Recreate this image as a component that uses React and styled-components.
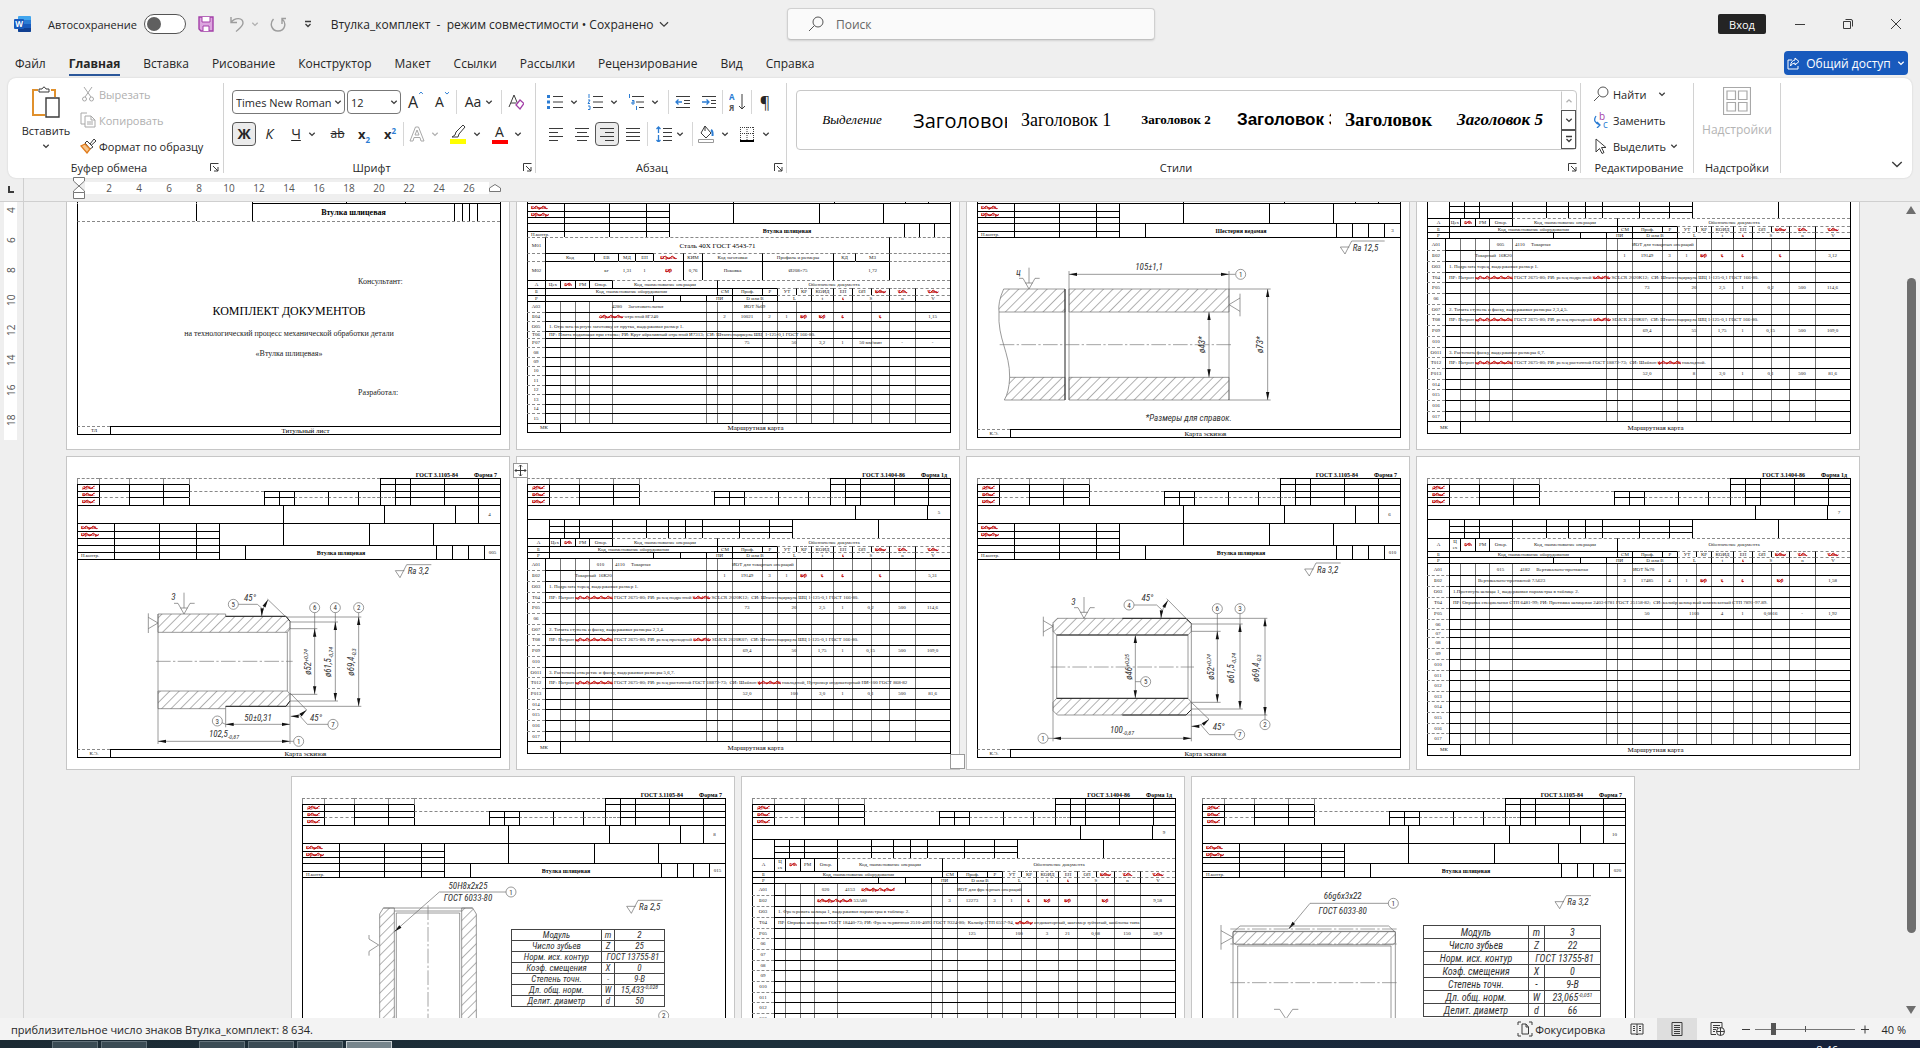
import styled, { createGlobalStyle, css } from "styled-components"

const GlobalStyle = createGlobalStyle`
  html, body, #root {
    height: 100%;
    margin: 0;
  }
  * {
    box-sizing: border-box;
  }
  body {
    background: #efefef;
    color: #262626;
    font-family: "Open Sans", "Noto Sans", sans-serif;
    font-size: 12px;
    overflow: hidden;
  }
  button, input, select {
    font: inherit;
    color: inherit;
    margin: 0;
    padding: 0;
    border: none;
    background: none;
  }
`

const App = styled.div`
  display: flex;
  flex-direction: column;
  height: 100vh;
`

/* ---------- icons ---------- */

const Svg = styled.svg`
  flex: none;
  display: block;
  fill: none;
  stroke: ${(p) => p.$color || "#3b3b3b"};
  stroke-width: 1;
`

const Icon = ({ w = 16, h = 16, color, children }) => (
  <Svg width={w} height={h} viewBox={`0 0 ${w} ${h}`} $color={color} aria-hidden="true">
    {children}
  </Svg>
)

const Chevron = ({ w = 8, color, up }) => (
  <Svg width={w} height={w} viewBox="0 0 8 8" $color={color} aria-hidden="true">
    <path d={up ? "M1.5 5.2 L4 2.8 L6.5 5.2" : "M1.3 2.8 L4 5.4 L6.7 2.8"} strokeWidth={w > 8 ? 0.8 : 1.3} />
  </Svg>
)

const WordIcon = () => (
  <Icon w={18} h={18}>
    <g stroke="none">
      <rect x="4" y="1" width="13" height="16" rx="1" fill="#41a5ee" />
      <rect x="4" y="5" width="13" height="4" fill="#2b7cd3" />
      <rect x="4" y="9" width="13" height="4" fill="#185abd" />
      <path d="M4 13 H17 V16 a1 1 0 0 1 -1 1 H5 a1 1 0 0 1 -1 -1 Z" fill="#103f91" />
      <rect x="0" y="4" width="10" height="10" rx="1" fill="#185abd" />
      <text x="5" y="12" fontSize="8" fontWeight="700" fill="#fff" textAnchor="middle">W</text>
    </g>
  </Icon>
)

const Launcher = () => (
  <Icon w={9} h={9}>
    <path d="M.5 8 V.5 H8.5 M3 3 L8 8 M8 4 V8 H4" />
  </Icon>
)

const SearchIcon = ({ w = 16 }) => (
  <Svg width={w} height={w} viewBox="0 0 16 16" $color="#555">
    <circle cx="10" cy="6" r="5" />
    <path d="M6.4 9.6 L1 15" />
  </Svg>
)

/* ---------- title bar ---------- */

const TitleBar = styled.header`
  display: flex;
  align-items: center;
  height: 48px;
  flex: none;
  padding-left: 14px;
`

const TitleSide = styled.div`
  display: flex;
  align-items: center;
  flex: 1;
  justify-content: ${(p) => (p.$end ? "flex-end" : "flex-start")};
`

const AutoSave = styled.label`
  display: flex;
  align-items: center;
  gap: 7px;
  margin-left: 16px;
  font-size: 11px;
`

const Toggle = styled.input`
  appearance: none;
  width: 42px;
  height: 20px;
  border: 1px solid #555;
  border-radius: 10px;
  background: #fff;
  display: flex;
  align-items: center;
  padding: 0 2px;

  &::before {
    content: "";
    width: 14px;
    height: 14px;
    border-radius: 50%;
    background: #5f5f5f;
  }
`

const PlainButton = styled.button`
  display: flex;
  align-items: center;
  justify-content: center;
  flex: none;
  gap: ${(p) => p.$gap ?? 6}px;
  width: ${(p) => (p.$w ? p.$w + "px" : "auto")};
  height: 24px;
`

const DocTitle = styled.div`
  display: flex;
  align-items: center;
  gap: 4px;
  margin-left: 9px;
  white-space: pre;
`

const SearchBox = styled.label`
  display: flex;
  align-items: center;
  gap: 12px;
  width: 368px;
  height: 32px;
  margin-left: 8px;
  padding: 0 20px;
  background: #fafafa;
  border: 1px solid #d0d0d0;
  border-bottom-color: #c0c0c0;
  border-radius: 4px;
  box-shadow: 0 1px 2px rgba(0, 0, 0, 0.12);

  input {
    flex: 1;
    outline: none;
  }
  input::placeholder {
    color: #666;
    opacity: 1;
  }
`

const SignIn = styled.button`
  width: 48px;
  height: 20px;
  background: #242424;
  color: #fff;
  border-radius: 2px;
  font-size: 11px;
  margin-right: 10px;
`

/* ---------- tabs ---------- */

const TabBar = styled.nav`
  display: flex;
  align-items: center;
  height: 30px;
  flex: none;
  padding: 0 12px 0 15px;
  gap: 23px;
`

const Tab = styled.a`
  color: inherit;
  text-decoration: none;
  line-height: 21px;
  margin-top: 2px;
  border-bottom: 2px solid ${(p) => (p.$active ? "#2b579a" : "transparent")};
  font-weight: ${(p) => (p.$active ? 700 : 400)};
`

const Share = styled.button`
  display: flex;
  align-items: center;
  justify-content: center;
  gap: 6px;
  width: 124px;
  height: 24px;
  margin-left: auto;
  background: #185abd;
  color: #fff;
  border-radius: 4px;
`

/* ---------- ribbon ---------- */

const Ribbon = styled.div`
  display: flex;
  flex: none;
  height: 100px;
  margin: 0 8px;
  background: #fff;
  border-radius: 8px;
  box-shadow: 0 0 2px rgba(0, 0, 0, 0.16);
`

const Group = styled.section`
  display: flex;
  flex-direction: column;
  flex: ${(p) => (p.$grow ? "0 1 " : "none; width: ")}${(p) => p.$w}px;
  min-width: 0;
  padding: ${(p) => p.$pad};
`

const GroupSep = styled.i`
  flex: none;
  width: 1px;
  height: 90px;
  margin-top: 5px;
  background: #d2d2d2;
`

const GroupLabel = styled.footer`
  display: flex;
  align-items: center;
  height: 20px;
  margin-top: auto;
  padding-bottom: 1px;

  span {
    flex: 1;
    text-align: center;
    white-space: nowrap;
    font-size: 11px;
  }
  span:not(:last-child) {
    padding-right: 12px;
  }
`

const ToolRow = styled.div`
  display: flex;
  align-items: center;
  height: 24px;
  margin-bottom: 8px;
`

const Tool = styled(PlainButton)`
  border-radius: 4px;
  ${(p) =>
    p.$on &&
    css`
      background: #ebebeb;
      border: 1px solid #555;
    `}
`

const ToolSep = styled.i`
  flex: none;
  width: 1px;
  height: 24px;
  margin-left: ${(p) => p.$gap || 0}px;
  background: #d6d6d6;
`

const Combo = styled.label`
  display: flex;
  align-items: center;
  width: ${(p) => p.$w}px;
  height: 24px;
  margin-right: 2px;
  padding: 0 2px 0 3px;
  border: 1px solid #777;
  border-radius: 4px;

  select {
    appearance: none;
    flex: 1;
    min-width: 0;
    outline: none;
    font-size: 11px;
  }
`

const Glyph = styled.span`
  font-size: ${(p) => p.$size || 14}px;
  line-height: 20px;
  font-weight: ${(p) => (p.$bold ? 700 : 400)};
  font-style: ${(p) => (p.$italic ? "italic" : "normal")};
  text-decoration: ${(p) => p.$line || "none"};

  sub, sup {
    font-size: 8px;
    line-height: 0;
    color: #2b7cd3;
  }
`

const Raised = styled.span`
  align-self: flex-start;
`

const Swatched = styled.span`
  display: block;
  width: 16px;
  height: 20px;
  font-size: 14px;
  line-height: 16px;
  text-align: center;
  border-bottom: 4px solid ${(p) => p.$color};
`

const ClipboardBody = styled.div`
  display: flex;
  gap: 8px;
`

const BigButton = styled.button`
  display: flex;
  flex-direction: column;
  align-items: center;
  gap: ${(p) => p.$gap || 4}px;
  width: ${(p) => (p.$w ? p.$w + "px" : "auto")};
  padding-top: 3px;
  font-size: ${(p) => p.$size || 11}px;
  color: ${(p) => (p.$off ? "#b4b4b4" : "inherit")};
`

const SmallList = styled.div`
  display: flex;
  flex-direction: column;
  gap: 2px;
`

const SmallButton = styled.button`
  display: flex;
  align-items: center;
  gap: ${(p) => p.$gap || 3}px;
  height: 24px;
  white-space: nowrap;
  font-size: 11px;
  color: ${(p) => (p.$off ? "#b0b0b0" : "inherit")};
`

const Gallery = styled.div`
  display: flex;
  height: 60px;
  border: 1px solid #c8c8c8;
  border-radius: 4px;
`

const GalleryItems = styled.div`
  display: flex;
  flex: 1;
  min-width: 0;
  gap: 14px;
  padding: 0 8px;
  overflow: hidden;
`

const StyleItem = styled.button`
  flex: 0 0 94px;
  overflow: hidden;
  white-space: nowrap;
  color: #000;
  text-align: ${(p) => (p.$center ? "center" : "left")};
  font: ${(p) => p.$font};
`

const GalleryNav = styled.div`
  display: flex;
  flex-direction: column;
  flex: none;
  width: 15px;
`

const NavButton = styled.button`
  flex: 1;
  display: flex;
  align-items: center;
  justify-content: center;
  border: 1px solid ${(p) => (p.$off ? "transparent" : "#555")};
  border-left-color: ${(p) => (p.$off ? "#c8c8c8" : "#555")};
`

const Collapse = styled.button`
  margin: auto 8px 7px auto;
`

/* ---------- rulers and canvas ---------- */

const RulerBar = styled.div`
  display: flex;
  align-items: center;
  flex: none;
  height: 24px;
  border-bottom: 1px solid #cfcfcf;
`

const RulerCorner = styled.div`
  display: flex;
  align-items: center;
  width: 24px;
  height: 23px;
  padding-left: 8px;
  border-right: 1px solid #cfcfcf;
`

const HRuler = styled.div`
  display: flex;
  align-items: center;
  align-self: flex-start;
  height: 20px;
  margin-left: 49px;

  ol {
    display: grid;
    grid-template-columns: repeat(13, 30px);
    width: 404px;
    height: 12px;
    margin: 0;
    padding: 0 0 0 9px;
    list-style: none;
    background: #fff;
    color: #555;
    font-size: 10px;
    line-height: 12px;
    text-align: center;
  }
`

const Work = styled.div`
  display: flex;
  flex: 1;
  min-height: 0;
`

const VRuler = styled.div`
  flex: none;
  width: 24px;
  border-right: 1px solid #cfcfcf;

  ol {
    width: 13px;
    margin: 0 0 0 4px;
    padding: 0 0 5px;
    list-style: none;
    background: #fff;
    color: #555;
    font-size: 10px;
  }
  li {
    display: flex;
    align-items: center;
    justify-content: center;
    height: 30px;
    writing-mode: vertical-rl;
    transform: rotate(180deg);
  }
  li:first-child {
    height: 16px;
    margin-bottom: 7px;
  }
`

const Canvas = styled.main`
  flex: 1;
  min-width: 0;
  overflow: hidden;
`

/* the view is scrolled down by 66px */
const Pages = styled.div`
  display: flex;
  flex-wrap: wrap;
  justify-content: center;
  gap: 6px;
  margin-top: -66px;
`

const ScrollBar = styled.div`
  display: flex;
  flex-direction: column;
  align-items: center;
  flex: none;
  width: 18px;
  padding: 4px 0;
`

const ScrollTrack = styled.div`
  flex: 1;
  padding-top: 64px;

  &::before {
    content: "";
    display: block;
    width: 9px;
    height: 90%;
    border-radius: 5px;
    background: #6e6e6e;
  }
`

/* ---------- document sheets ---------- */

const Sheet = styled.article`
  position: relative;
  display: flex;
  flex-direction: column;
  width: 444px;
  height: 314px;
  padding: 0 8px 0 10px;
  background: #fff;
  border: 1px solid #c6c6c6;
  color: #222;
  font-family: "Liberation Serif", serif;
  font-size: 5px;
  line-height: 6px;
`

const FormName = styled.div`
  display: flex;
  justify-content: flex-end;
  align-items: flex-end;
  gap: 16px;
  height: 21px;
  padding-right: 4px;
  color: #000;
  font-size: 6px;
  font-weight: 700;
`

const Frame = styled.div`
  display: flex;
  flex-direction: column;
  width: 424px;
  height: ${(p) => p.$h}px;
  border: solid #000;
  border-width: 0 1px 1px 0;
`

const lineOf = (mark) =>
  mark === "-" || mark === "|" ? "1px solid #000" : mark === "." ? "1px dashed #888" : "1px solid transparent"

const Strip = styled.div`
  display: flex;
  flex: none;
  height: ${(p) => p.$h}px;
`

const Cell = styled.div`
  display: flex;
  align-items: center;
  justify-content: center;
  flex: none;
  width: ${(p) => p.$w}px;
  border-top: ${(p) => lineOf(p.$top)};
  border-left: ${(p) => lineOf(p.$left)};
  white-space: pre;
  text-align: center;
  min-height: 0;
`

const Block = styled.div`
  display: flex;
`

const Err = styled.span`
  color: #b00;
  font-weight: 700;
  text-decoration: underline wavy #c00000 1px;
  text-underline-offset: -4px;
  text-decoration-skip-ink: none;
`

const Role = styled.span`
  margin: 0 auto 0 3px;
`

const Big = styled.span`
  font-size: ${(p) => p.$size || 7}px;
  font-weight: ${(p) => (p.$bold ? 700 : 400)};
  line-height: 8px;
  color: #000;
`

// top and left hold one mark per cell: - or | solid, . dashed, blank none
const Row = ({ h, at, end = 423, top = "", left = "", text = {} }) => (
  <Strip $h={h}>
    {at.map((x, i) => (
      <Cell key={x} $w={(at[i + 1] ?? end) - x} $top={top[i] ?? "-"} $left={left[i] ?? "|"}>
        {text[i]}
      </Cell>
    ))}
  </Strip>
)

const TOP = [0, 22, 52, 86, 112, 303, 318, 333, 367, 401]
const TOP_LOW = [0, 22, 52, 86, 112, 187, 202, 217, 251, 281, 303, 318, 333, 367, 401]

const FormTop = () => (
  <>
    <Row h={6} at={TOP} top=".....-----" left=".....|||||" />
    <Row h={7} at={TOP} top="---- -----" text={{ 0: <Err>Дубл.</Err> }} />
    <Row h={6} at={TOP_LOW} top="----.----------" text={{ 0: <Err>Взам.</Err> }} />
    <Row h={8} at={TOP_LOW} top="-.-- --....----" text={{ 0: <Err>Подл.</Err> }} />
  </>
)

const Signatures = ({ heights, name, oper, split = true }) => {
  const [a, b, c, d, e] = heights
  const at = [0, 37, 82, 119]
  const nameAt = split ? [142, 168, 359, 375, 391, 407] : [142, 377, 392, 407]
  return (
    <Block>
      <div>
        <Row h={a} at={at} end={142} text={{ 0: <Role><Err>Разраб.</Err></Role> }} />
        <Row h={b} at={at} end={142} text={{ 0: <Role><Err>Провер.</Err></Role> }} />
        <Row h={c} at={at} end={142} />
        <Row h={d} at={at} end={142} />
        <Row h={e} at={at} end={142} text={{ 0: <Role>Н.контр.</Role> }} />
      </div>
      <div>
        <Row h={a + b + c} at={[142, 206, 292, 356]} />
        <Row h={d + e} at={nameAt} text={{ [split ? 1 : 0]: <Big $size={6} $bold>{name}</Big>, 5: oper }} />
      </div>
    </Block>
  )
}

const Footer = ({ h = 8, mark, title, dashed }) => (
  <Row h={h} at={[0, 33]} top={dashed ? ".-" : "--"} text={{ 0: mark, 1: <Big>{title}</Big> }} />
)

/* ---------- route sheet table ---------- */

const GUIDES = [33, 48, 62, 85, 179, 190, 205, 235, 250, 269, 284, 306, 325, 344, 362, 388]

const rule = (x, color) => `linear-gradient(${color}, ${color}) ${x}px 0 / 1px 100% no-repeat`

const RouteTable = styled.table`
  table-layout: fixed;
  width: 423px;
  flex: none;
  border-spacing: 0;
  background: ${(p) => [rule(0, "#000"), rule(p.$label, "#000"), ...GUIDES.map((x) => rule(x, "#777"))].join(", ")};

  td, th {
    padding: 0;
    border-top: 1px solid #000;
    text-align: center;
    vertical-align: middle;
    font-weight: 400;
    line-height: 6px;
    white-space: pre;
  }
  th {
    border-top: 1px dashed #888;
  }
  tr:first-child th {
    border-top: 1px solid #000;
  }
`

const RouteRow = styled.tr`
  height: ${(p) => p.$h}px;
`

const LeftCell = styled.td`
  && {
    text-align: left;
    padding-left: ${(p) => p.$pad}px;
  }
`

const Route = ({ label, rows }) => {
  const at = [0, label, ...GUIDES, 423]
  return (
    <RouteTable $label={label}>
      <colgroup>
        {at.slice(0, -1).map((x, i) => (
          <col key={x} width={at[i + 1] - x} />
        ))}
      </colgroup>
      <tbody>
        {rows.map(([h, name, cells = {}]) => {
          const out = []
          for (let i = 1; i < at.length - 1; i++) {
            const c = cells[i]
            if (c && c.span) {
              out.push(
                c.center ? (
                  <td key={i} colSpan={c.span}>{c.t}</td>
                ) : (
                  <LeftCell key={i} colSpan={c.span} $pad={c.pad ?? 3}>{c.t}</LeftCell>
                )
              )
              i += c.span - 1
            } else {
              out.push(<td key={i}>{c}</td>)
            }
          }
          return (
            <RouteRow key={name} $h={h}>
              <th scope="row">{name}</th>
              {out}
            </RouteRow>
          )
        })}
      </tbody>
    </RouteTable>
  )
}

const line = (t, pad = 4) => ({ 1: { t, span: 17, pad } })
const mid = (t) => ({ t, span: 2, center: true })
const e = (t) => <Err>{t}</Err>

const cut = (d, l, t, s, n, v) => ({ 8: d, 10: mid(l), 12: t, 13: "1", 14: mid(s), 16: n, 17: v })

const RouteHead = ({ heights, label = 22, shop = "Цех" }) => (
  <>
    <Row
      h={heights[0]}
      at={[0, label, 33, 48, 62, 85, 190]}
      top="-----.."
      left="||||||"
      text={{ 0: "А", 1: shop, 2: e("Уч."), 3: "РМ", 4: "Опер.", 5: "Код, наименование операции", 6: "Обозначение документа" }}
    />
    <Row
      h={heights[1]}
      at={[0, label, 190, 205, 235, 250, 269, 284, 306, 325, 344, 362, 388]}
      top="-----........"
      text={{ 0: "Б", 1: "Код, наименование оборудования", 2: "СМ", 3: "Проф.", 4: "Р", 5: "УТ", 6: "КР", 7: "КОИД", 8: "ЕН", 9: "ОП", 10: e("Кшт."), 11: e("Тпз."), 12: e("Тшт.") }}
    />
    <Row
      h={heights[2]}
      at={[0, label, 126, 153, 179, 205, 250, 284, 306, 325, 362, 388]}
      top="------......"
      text={{ 0: "Р", 4: "ПИ", 5: "D или В", 6: "L", 7: "t", 8: e("i"), 9: "S", 10: "n", 11: "V" }}
    />
  </>
)

const RouteSheet = ({ page, tall, rows, footer, shop, children }) => (
  <Sheet>
    <FormName><span>ГОСТ 3.1404-86</span><span>Форма 1д</span></FormName>
    <Frame $h={footer.frame}>
      <FormTop />
      <Row h={14} at={[0, 328, 400]} text={{ 2: page }} />
      <Block>
        <Row h={19} at={[0]} end={22} />
        <div>
          {[7, 6, 6].map((h, i) => (
            <Row key={i} h={h} at={[22, 37, 52, 85, 119, 141, 158, 175, 212, 242]} end={265} />
          ))}
        </div>
        <Row h={19} at={[265, 351]} />
      </Block>
      <RouteHead heights={[tall ? 13 : 8, 6, 6]} shop={shop} />
      <Route label={tall ? 22 : 18} rows={rows} />
      <Footer h={footer.h} mark="МК" title="Маршрутная карта" />
    </Frame>
    {children}
  </Sheet>
)

const HEIGHTS = [12, 11, 11, 10, 11, 11, 10, 11, 11, 11, 10, 11, 11, 10, 11, 11, 10]
const NAMES = ["А01", "Б02", "О03", "Т04", "Р05", "06", "О07", "Т08", "Р09", "010", "О011", "Т012", "Р013", "014", "015", "016", "017"]

const turning = (oper, time, texts, boring) => {
  const cells = {
    0: { 4: oper, 5: { t: "4110     Токарная", span: 1 }, 8: { t: "ИОТ для токарных операций", span: 7, pad: 0 } },
    1: { 3: { t: "Токарный  16К20", span: 3, pad: 0 }, 7: "1", 8: "19149", 9: "3", 10: "1", 11: e("Кр"), 12: e("1"), 13: e("1"), 15: e("1"), 17: time },
    2: line(texts[0]),
    3: line(<>ПР: Патрон {e("трехкулачковый")} ГОСТ 2675-80; РИ: резец подрезной {e("Sandvik")} SCLCR 2020K12;  СИ: Штангенциркуль ШЦ 1-125-0,1 ГОСТ 166-80.</>),
    4: cut("73", "20", "2,5", "0,2", "500", "114,6"),
    6: line(texts[1]),
    7: line(<>ПР: Патрон {e("трехкулачковый")} ГОСТ 2675-80; РИ: резец проходной {e("Sandvik")} SDJCR 2020K07;  СИ: Штангенциркуль ШЦ 1-125-0,1 ГОСТ 166-80.</>),
    8: cut("69,4", boring[0], "1,75", "0,15", "500", "109,0"),
    10: line(texts[2]),
    11: line(<>ПР: Патрон {e("трехкулачковый")} ГОСТ 2675-80; РИ: резец расточной ГОСТ 18872-73;  СИ: Шаблон {e("фасочный")} {boring[2]}</>),
    12: cut("52,0", boring[1], "3,0", "0,1", "500", "81,6"),
  }
  return NAMES.map((n, i) => [HEIGHTS[i], n, cells[i]])
}

const turning5 = turning("005", "3,12",
  ["1. Подрезать торец, выдерживая размер 1.", "2. Точить ступень и фаску, выдерживая размеры 2,3,4,5.", "3. Расточить фаску, выдерживая размеры 6,7."],
  ["55", "8", "накладной."])
const turning10 = turning("010", "5,31",
  ["1. Подрезать торец, выдерживая размер 1.", "2. Точить ступень и фаску, выдерживая размеры 2,3,4.", "3. Расточить отверстие и фаску, выдерживая размеры 5,6,7."],
  ["50", "100", "накладной, Нутромер индикаторный НИ-100 ГОСТ 868-82"])

const plain = (from, heights, prefixed) =>
  heights.map((h, i) => [h, from + i > 9 && prefixed ? "0" + (from + i) : String(from + i).padStart(2, "0")])

const cuttingRows = [
  [11, "А03", { 5: { t: "4280     Заготовительная", span: 1, pad: 0 }, 8: { t: "ИОТ №69", span: 2, pad: 12 } }],
  [9, "Б04", { 4: { t: <>{e("Абразивно")}-отрезной 8Г240</>, span: 2, pad: 10 }, 7: "2", 8: "10021", 9: "2", 10: "1", 11: e("Кр"), 12: e("Кр"), 13: e("1"), 15: e("1"), 17: "1,15" }],
  [10, "О05", line("1. Отрезать мерную заготовку от прутка, выдерживая размер 1.")],
  [7, "Т06", line("ПР: Плита подающая при станке; РИ: Круг абразивный отрезной И7313;  СИ: Штангенциркуль ШЦ  1-125-0,1 ГОСТ 166-80.")],
  [9, "Р07", { 8: "75", 10: mid("50"), 12: "3,2", 13: "1", 14: mid("50 мм/мин"), 16: "-", 17: "-" }],
  ...plain(8, [10, 9, 9, 10, 9, 10, 9, 10]),
]

const broachRows = [
  [12, "А01", { 4: "015", 5: { t: "4182     Вертикально-протяжная", span: 1, pad: 8 }, 8: { t: "ИОТ №70", span: 2, pad: 1 } }],
  [11, "Б02", { 3: { t: "Вертикально-протяжной 7А623", span: 3, pad: 3 }, 7: "3", 8: "17485", 9: "4", 10: "1", 11: e("Кр"), 12: e("1"), 13: e("1"), 15: e("Кр"), 17: "1,58" }],
  [11, "О03", line("1.Протянуть шлицы 1, выдерживая параметры в таблице 2.")],
  [11, "Т04", line("ПР: Оправка специальная СТП 6481-99; РИ: Протяжка шлицевая 2403-0781 ГОСТ 25158-82;  СИ: калибр шлицевый комплексный СТП 7891-97.89.")],
  [11, "Р05", { 8: "50", 10: mid("1100"), 12: "4", 13: "1", 14: mid("0,0016"), 16: "-", 17: "1,92" }],
  ...plain(6, [10, 8, 11, 11, 11, 10, 11, 10, 11, 11, 10, 11], true),
]

const millRows = [
  [12, "А01", { 4: "020", 5: { t: <>4153     {e("Зубофрезерная")}</>, span: 1, pad: 8 }, 8: { t: "ИОТ для фрезерных операций", span: 7, pad: 0 } }],
  [11, "Б02", { 4: { t: <>{e("Зубофрезерный")} 53А80</>, span: 2, pad: 3 }, 7: "3", 8: "12273", 9: "3", 10: "1", 11: e("1"), 12: e("Кр"), 13: e("Кр"), 15: e("Кр"), 17: "9,58" }],
  [11, "О03", line("1. Фрезеровать шлицы 1, выдерживая параметры в таблице 2.")],
  [11, "Т04", line(<>ПР: Оправка шлицевая ГОСТ 18440-73; РИ: Фреза червячная 2510-4093 ГОСТ 9324-80;  Калибр СТП 6557-94, {e("зубомер")} индикаторный, шагомер зубчатый, шаблоны типа</>)],
  [10, "Р05", { 8: "125", 10: mid("100"), 12: "3", 13: "21", 14: mid("0,08"), 16: "150", 17: "58,9" }],
  ...plain(6, [11, 11, 10, 11, 11, 10, 11, 11, 10, 11, 11], true),
]

/* ---------- sketches (three drawing units per pixel) ---------- */

const DRAFT_FONT = '"Roboto Condensed", "Liberation Sans Narrow", "Liberation Sans", sans-serif'

const Drawing = styled.svg`
  display: block;
  flex: none;
  overflow: visible;
  fill: none;
  stroke: #666;
  stroke-width: 2;

  text {
    font-family: ${DRAFT_FONT};
    font-style: italic;
    font-size: 27px;
    fill: #333;
    stroke: none;
  }
  .hatch {
    fill: url(#hatch);
  }
  .bold {
    stroke: #222;
    stroke-width: 3;
  }
  .axis {
    stroke: #777;
    stroke-dasharray: 44 7 7 7;
  }
  .tip {
    fill: #111;
    stroke: none;
  }
`

const Hatch = () => (
  <defs>
    <pattern id="hatch" width="20" height="20" patternUnits="userSpaceOnUse" patternTransform="rotate(45)">
      <path d="M1 0 V20" stroke="#777" strokeWidth="2" />
    </pattern>
  </defs>
)

const Tip = ({ x, y, turn }) => (
  <path className="tip" d="M0 0 L24 -5 V5 Z" transform={`translate(${x} ${y}) rotate(${turn})`} />
)

const HDim = ({ x1, x2, y }) => (
  <>
    <path d={`M${x1} ${y} H${x2}`} />
    <Tip x={x1} y={y} turn={0} />
    <Tip x={x2} y={y} turn={180} />
  </>
)

const VDim = ({ x, y1, y2 }) => (
  <>
    <path d={`M${x} ${y1} V${y2}`} />
    <Tip x={x} y={y1} turn={90} />
    <Tip x={x} y={y2} turn={-90} />
  </>
)

const BalloonText = styled.text`
  && {
    font-style: normal;
    font-size: 21px;
    text-anchor: middle;
  }
`

const Balloon = ({ x, y, n }) => (
  <>
    <circle cx={x} cy={y} r="15" />
    <BalloonText x={x} y={y + 8}>{n}</BalloonText>
  </>
)

const Size = ({ x, y, turn = 0, up, down, children }) => (
  <text transform={`translate(${x} ${y}) rotate(${turn})`} textAnchor="middle">
    {children}
    {up && <tspan dy="-10" fontSize="18">{up}</tspan>}
    {down && <tspan dy="6" fontSize="18">{down}</tspan>}
  </text>
)

const Rough = ({ x, y, value }) => (
  <>
    <path d={`M${x + 27} ${y} H${x} L${x + 14} ${y + 21} L${x + 34} ${y - 18} H${x + (value.length > 3 ? 133 : 108)}`} />
    <text x={x + 37} y={y + 11}>Ra {value}</text>
  </>
)

const Support = ({ x, y, label }) => (
  <>
    <path d={`M${x} ${y - 64} V${y - 18} M${x - 30} ${y - 32} H${x - 18} L${x} ${y} L${x + 18} ${y - 32} H${x + 32} M${x - 11} ${y - 18} H${x + 11}`} />
    <text x={x - 38} y={y - 41}>{label}</text>
  </>
)

const Stop = ({ x, y }) => <path d={`M${x - 29} ${y - 29} V${y + 30} M${x - 29} ${y - 17} L${x} ${y} L${x - 29} ${y + 17}`} />

const BlankSketch = () => (
  <Drawing width="423" height="192" viewBox="52 127 1269 576">
    <Hatch />
    <Rough x={1139} y={154} value="12,5" />
    <Support x={205} y={280} label="ц" />
    <path className="hatch" d="M129 280 H313 V349 H115 Q111 320 129 280 Z" />
    <path className="hatch" d="M147 545 H313 V613 H131 Q145 590 147 545 Z" />
    <path className="hatch" d="M325 280 H805 V349 H325 Z M325 545 H805 V613 H325 Z" />
    <path d="M115 349 C110 430 148 470 147 545" />
    <path className="bold" d="M313 280 V613" />
    <path d="M325 226 V613 M805 226 V613 M805 280 H930 M805 613 H930" />
    <path className="axis" d="M117 447 H815" />
    <HDim x1={325} x2={805} y={236} />
    <path d="M805 236 H824 M838 294 V362 M838 307 L805 327 L838 347" />
    <Balloon x={840} y={236} n="1" />
    <VDim x={745} y1={349} y2={545} />
    <VDim x={921} y1={280} y2={613} />
    <Size x={565} y={224}>105±1,1</Size>
    <Size x={733} y={447} turn={-90}>ø43*</Size>
    <Size x={906} y={447} turn={-90}>ø73*</Size>
    <Size x={684} y={675}>*Размеры для справок.</Size>
  </Drawing>
)

const StepSketch = () => (
  <Drawing width="423" height="190" viewBox="52 328 1269 570">
    <Rough x={1004} y={360} value="3,2" />
    <Support x={370} y={490} label="3" />
    <Stop x={292} y={517} />
    <path className="hatch" d="M292 490 H495 V497 H676 L688 512 V534 L680 545 H292 Z" />
    <path className="hatch" d="M292 721 H680 L688 731 V751 L676 767 H495 V774 H292 Z" />
    <path className="bold" d="M495 497 H676 L688 512 M495 767 H676 L688 751" />
    <path d="M292 490 V880 M680 545 V721 M688 512 V880 M495 774 V830" />
    <path d="M688 534 H770 M688 731 H770 M688 514 H832 M688 751 H832 M676 499 H902 M676 767 H902" />
    <path className="axis" d="M286 632 H696" />
    <path d="M762 486 V540 M824 486 V520 M894 486 V510" />
    <VDim x={762} y1={534} y2={731} />
    <VDim x={824} y1={514} y2={751} />
    <VDim x={894} y1={499} y2={767} />
    <Balloon x={762} y={471} n="6" />
    <Balloon x={824} y={471} n="4" />
    <Balloon x={894} y={471} n="2" />
    <Size x={752} y={634} turn={-90} up="+0,74">ø52</Size>
    <Size x={810} y={634} turn={-90} down="-0,74">ø61,5</Size>
    <Size x={880} y={634} turn={-90} down="-0,3">ø69,4</Size>
    <path d="M676 499 L620 445 M603 497 Q606 468 622 447 M533 461 H590 L606 475" />
    <Tip x={603} y={497} turn={-87} />
    <Tip x={622} y={447} turn={120} />
    <Balloon x={518} y={461} n="5" />
    <Size x={568} y={451}>45°</Size>
    <path d="M688 727 L738 778 M690 797 Q718 797 738 778 M716 794 L740 821 H802" />
    <Tip x={690} y={797} turn={0} />
    <Tip x={738} y={778} turn={140} />
    <Balloon x={817} y={821} n="7" />
    <Size x={766} y={811}>45°</Size>
    <HDim x1={495} x2={688} y={821} />
    <path d="M484 816 L495 821" />
    <Balloon x={470} y={811} n="3" />
    <Size x={592} y={811}>50±0,31</Size>
    <HDim x1={292} x2={688} y={872} />
    <path d="M688 872 H699" />
    <Balloon x={714} y={872} n="1" />
    <Size x={490} y={858} down="-0,87">102,5</Size>
  </Drawing>
)

const SleeveSketch = () => (
  <Drawing width="423" height="190" viewBox="52 328 1269 570">
    <Rough x={1032} y={355} value="3,2" />
    <Support x={370} y={503} label="3" />
    <Stop x={277} y={527} />
    <path className="hatch" d="M290 503 H676 L692 519 V542 L682 553 H288 L277 542 V516 Z" />
    <path className="hatch" d="M288 743 H682 L692 755 V777 L676 793 H290 L277 780 V755 Z" />
    <path className="bold" d="M485 503 H676 L692 519 M485 793 H676 L692 777 M288 553 H682 M288 743 H682" />
    <path d="M277 520 V872 M288 553 V743 M682 553 V743 M692 519 V872" />
    <path d="M692 542 H780 M692 755 H780 M692 520 H846 M692 775 H846 M676 503 H920 M676 793 H920" />
    <path className="axis" d="M270 649 H700" />
    <path d="M770 489 V550 M838 489 V525 M913 790 V807" />
    <VDim x={524} y1={553} y2={743} />
    <VDim x={770} y1={542} y2={755} />
    <VDim x={838} y1={520} y2={775} />
    <VDim x={913} y1={503} y2={793} />
    <Balloon x={770} y={474} n="6" />
    <Balloon x={838} y={474} n="3" />
    <Balloon x={913} y={822} n="2" />
    <path d="M524 693 H540" />
    <Balloon x={555} y={693} n="5" />
    <Size x={514} y={649} turn={-90} up="+0,25">ø46</Size>
    <Size x={760} y={649} turn={-90} up="+0,74">ø52</Size>
    <Size x={821} y={652} turn={-90} down="-0,74">ø61,5</Size>
    <Size x={895} y={652} turn={-90} down="-0,3">ø69,4</Size>
    <path d="M676 503 L618 444 M601 503 Q604 470 622 449 M520 463 H588 L604 478" />
    <Tip x={601} y={503} turn={-87} />
    <Tip x={622} y={449} turn={122} />
    <Balloon x={505} y={463} n="4" />
    <Size x={560} y={452}>45°</Size>
    <path d="M692 755 L745 806 M692 827 Q724 827 745 806 M720 822 L746 852 H822" />
    <Tip x={692} y={827} turn={0} />
    <Tip x={745} y={806} turn={140} />
    <Balloon x={837} y={852} n="7" />
    <Size x={774} y={839}>45°</Size>
    <HDim x1={277} x2={692} y={863} />
    <path d="M262 863 H277" />
    <Balloon x={247} y={863} n="1" />
    <Size x={484} y={847} down="-0,87">100</Size>
  </Drawing>
)

const SketchBody = styled.div`
  display: flex;
  flex: 1;
  min-height: 0;
  border-left: 1px solid #000;
  border-top: 1px solid #000;
`

const ParamTable = styled.table`
  border-collapse: collapse;
  width: ${(p) => p.$w}px;
  table-layout: fixed;
  color: #333;
  font: italic ${(p) => p.$size}px ${DRAFT_FONT};

  tr {
    height: ${(p) => p.$row}px;
  }
  th, td {
    padding: 0;
    border: 1px solid #444;
    line-height: 9px;
    font-weight: 400;
    text-align: center;
    white-space: nowrap;
  }
  sup {
    font-size: 6px;
    line-height: 0;
  }
`

const Params = ({ w, size, row, cols, m, z, norm, tol, d }) => (
  <ParamTable $w={w} $size={size} $row={row}>
    <colgroup>{cols.map((c, i) => <col key={i} width={c} />)}</colgroup>
    <tbody>
      <tr><th scope="row">Модуль</th><td>m</td><td>{m}</td></tr>
      <tr><th scope="row">Число зубьев</th><td>Z</td><td>{z}</td></tr>
      <tr><th scope="row">Норм. исх. контур</th><td colSpan={2}>ГОСТ 13755-81</td></tr>
      <tr><th scope="row">Коэф. смещения</th><td>X</td><td>0</td></tr>
      <tr><th scope="row">Степень точн.</th><td>-</td><td>9-В</td></tr>
      <tr><th scope="row">Дл. общ. норм.</th><td>W</td><td>{norm}<sup>{tol}</sup></td></tr>
      <tr><th scope="row">Делит. диаметр</th><td>d</td><td>{d}</td></tr>
    </tbody>
  </ParamTable>
)

const BroachSketch = () => (
  <>
    <Drawing width="208" height="192" viewBox="66 322 624 576">
      <Size x={561} y={356}>50H8x2x25</Size>
      <Size x={561} y={391}>ГОСТ 6033-80</Size>
      <path d="M340 483 L475 364 H675" />
      <Tip x={340} y={483} turn={-41} />
      <Balloon x={690} y={364} n="1" />
      <path className="hatch" d="M340 412 V900 H296 V430 L307 412 Z M542 412 V900 H586 V430 L575 412 Z" />
      <path d="M307 412 H575 M340 421 H542 M346 427 V900 M536 427 V900 M346 427 H536" />
      <path className="axis" d="M441 404 V900" />
      <path d="M264 493 V505 L293 523 L264 542 V555" />
    </Drawing>
    <div>
      <Drawing width="153" height="51" viewBox="693 322 459 153">
        <Rough x={1040} y={407} value="2,5" />
      </Drawing>
      <Params w={154} size={9} row={11} cols={[90, 13, 50]} m="2" z="25" norm="15,433" tol="-0,028" d="50" />
      <Drawing width="153" height="20" viewBox="693 718 459 60">
        <Balloon x={1151} y={744} n="2" />
      </Drawing>
    </div>
  </>
)

const MillSketch = () => (
  <>
    <Drawing width="220" height="192" viewBox="66 322 660 576">
      <Size x={485} y={385}>66g6x3x22</Size>
      <Size x={485} y={429}>ГОСТ 6033-80</Size>
      <path d="M323 475 L387 398 H622" />
      <Tip x={323} y={475} turn={-50} />
      <Balloon x={637} y={398} n="1" />
      <path d="M156 485 L177 466 H623 L643 485 M156 485 V900 M643 485 V900" />
      <path className="hatch" d="M156 483 H643 V516 L635 522 H166 L156 516 Z" />
      <path d="M170 526 H630 M170 526 V900 M630 526 V900 M156 482 H643" />
      <path className="axis" d="M148 475 H652 M148 520 H652 M148 636 H652" />
      <path d="M120 463 V537 M120 480 L156 500 L120 520 M279 716 H296 L315 745 L335 716 H352" />
    </Drawing>
    <div>
      <Drawing width="178" height="47" viewBox="726 322 534 141">
        <Rough x={1122} y={393} value="3,2" />
      </Drawing>
      <Params w={178} size={10} row={13} cols={[105, 16, 56]} m="3" z="22" norm="23,065" tol="-0,051" d="66" />
    </div>
  </>
)

const SHORT = [8, 6, 6, 8, 6]
const TALL = [8, 7, 7, 7, 7]

const SketchSheet = ({ page, oper, heights = TALL, name = "Втулка шлицевая", children }) => (
  <Sheet>
    <FormName><span>ГОСТ 3.1105-84</span><span>Форма 7</span></FormName>
    <Frame $h={280}>
      <FormTop />
      <Row h={18} at={[0, 206, 307, 378, 401]} text={{ 4: page }} />
      <Signatures heights={heights} name={name} oper={oper} />
      <SketchBody>{children}</SketchBody>
      <Footer mark="К.Э." title="Карта эскизов" dashed />
    </Frame>
  </Sheet>
)

/* ---------- title sheet ---------- */

const TitleBody = styled.div`
  flex: 1;
  display: flex;
  flex-direction: column;
  align-items: center;
  border-left: 1px solid #000;
  border-top: 1px dashed #888;
  font-size: 8px;
  line-height: 10px;

  h1 {
    margin: 4px 0 8px;
    font-size: 12px;
    line-height: 20px;
    font-weight: 400;
    color: #000;
  }
  p {
    margin: 0 0 10px;
  }
`

const Person = styled.p`
  align-self: flex-end;
  width: 142px;

  &:first-child {
    padding-top: 55px;
  }
  &:last-child {
    padding-top: 19px;
  }
`

const TitleSheet = () => (
  <Sheet>
    <FormName />
    <Frame $h={277}>
      <Row h={45} at={[0, 119, 175, 269, 328]} />
      <Block>
        <Row h={18} at={[0, 119]} end={175} top="  " />
        <Row h={18} at={[175, 377, 385, 392, 400]} text={{ 0: <Big $size={8} $bold>Втулка шлицевая</Big> }} />
      </Block>
      <TitleBody>
        <Person>Консультант:</Person>
        <h1>КОМПЛЕКТ ДОКУМЕНТОВ</h1>
        <p>на технологический процесс механической обработки детали</p>
        <p>«Втулка шлицевая»</p>
        <Person>Разработал:</Person>
      </TitleBody>
      <Footer mark="ТЛ" title="Титульный лист" dashed />
    </Frame>
  </Sheet>
)

const MAT = [0, 18, 67, 91, 108, 126, 156, 175, 235, 306, 328, 362]

const CuttingSheet = () => (
  <Sheet>
    <FormName />
    <Frame $h={275}>
      <FormTop />
      <Row h={18} at={[0, 206, 307, 378, 401]} />
      <Signatures heights={SHORT} name="Втулка шлицевая" split={false} />
      <Row h={16} at={[0, 18, 362]} top="..." text={{ 0: "М01", 1: <Big>Сталь 40Х ГОСТ 4543-71</Big> }} />
      <Row
        h={8}
        at={MAT}
        top=".----......."
        text={{ 1: "Код", 2: "ЕВ", 3: "МД", 4: "ЕН", 5: e("Н.расх."), 6: "КИМ", 7: "Код заготовки", 8: "Профиль и размеры", 9: "КД", 10: "МЗ" }}
      />
      <Row
        h={19}
        at={MAT}
        top=".----------."
        left="||    |||| |"
        text={{ 0: "М02", 2: "кг", 3: "1,31", 4: "1", 5: e("Нр"), 6: "0,76", 7: "Поковка", 8: "Ø208×75", 10: "1,72" }}
      />
      <RouteHead heights={[8, 7, 6]} label={18} />
      <Route label={18} rows={cuttingRows} />
      <Footer h={9} mark="МК" title="Маршрутная карта" />
    </Frame>
  </Sheet>
)

const MoveHandle = styled.button`
  position: absolute;
  left: -4px;
  top: 6px;
  width: 15px;
  height: 15px;
  background: #fff;
  border: 1px solid #999;
`

const SizeHandle = styled.i`
  position: absolute;
  right: -6px;
  bottom: 0;
  width: 15px;
  height: 15px;
  background: #fff;
  border: 1px solid #999;
`

/* ---------- status bar and taskbar ---------- */

const StatusBar = styled.footer`
  display: flex;
  align-items: center;
  flex: none;
  height: 22px;
  padding: 0 14px 0 11px;
  background: #f3f3f3;
  font-size: 11px;
`

const FocusButton = styled(PlainButton)`
  margin: 0 12px 0 auto;
`

const ViewButton = styled.button`
  display: flex;
  align-items: center;
  justify-content: center;
  width: 40px;
  height: 22px;
  background: ${(p) => (p.$on ? "#dedede" : "none")};
`

const Zoom = styled.input`
  appearance: none;
  width: 100px;
  height: 14px;
  background: linear-gradient(#555, #555) 50px 4px / 1px 6px no-repeat, linear-gradient(#777, #777) 0 7px / 100% 1px no-repeat;

  &::-webkit-slider-thumb {
    appearance: none;
    width: 5px;
    height: 12px;
    background: #555;
  }
`

const Percent = styled.output`
  margin-left: 6px;
  white-space: nowrap;
`

const TaskBar = styled.div`
  display: flex;
  flex: none;
  gap: 3px;
  height: 8px;
  padding: 1px 82px 0 52px;
  overflow: hidden;
  background: linear-gradient(90deg, #1b2a33, #1d303b 40%, #16213a);
  color: #fff;
  font-size: 11px;
`

const Task = styled.i`
  width: 46px;
  height: 12px;
  border: 1px solid ${(p) => (p.$on ? "#c9d0d3" : p.$bare ? "transparent" : "#64737b")};
  background: ${(p) => (p.$on ? "#76858c" : p.$bare ? "none" : "#3a4b54")};
`

const Clock = styled.time`
  margin-left: auto;
  padding-top: 1px;
`

const TABS = ["Файл", "Главная", "Вставка", "Рисование", "Конструктор", "Макет", "Ссылки", "Рассылки", "Рецензирование", "Вид", "Справка"]

const STYLES = [
  ["Выделение", 'italic 13px "Liberation Serif", serif', true],
  ["Заголовок", '20px "Open Sans", sans-serif'],
  ["Заголовок 1", '18px "Liberation Serif", serif'],
  ["Заголовок 2", 'bold 13px "Liberation Serif", serif', true],
  ["Заголовок 3", 'bold 17px "Liberation Sans", sans-serif'],
  ["Заголовок", 'bold 19px "Liberation Serif", serif'],
  ["Заголовок 5", 'italic bold 17px "Liberation Serif", serif', true],
]

const lines = (rows) => <path d={rows.map(([x1, x2], i) => `M${x1} ${i * 4 + 2}.5 H${x2}`).join(" ")} />

const Split = ({ w, gap = 7, off, label, children }) => (
  <Tool $w={w} $gap={gap} aria-label={label}>
    {children}
    <Chevron color={off ? "#b0b0b0" : undefined} />
  </Tool>
)

const Header = () => (
  <>
    <TitleBar>
      <TitleSide>
        <WordIcon />
        <AutoSave>Автосохранение<Toggle type="checkbox" /></AutoSave>
        <PlainButton $w={40} aria-label="Сохранить">
          <Icon color="#a33fa8">
            <path d="M1 1 H15 V15 H3 L1 13 Z" fill="#dca6df" strokeWidth="1.4" />
            <path d="M4 1 V6 H12 V1 M5 15 V10 H11 V15" fill="#fff" />
          </Icon>
        </PlainButton>
        <PlainButton $w={36} aria-label="Отменить">
          <Icon color="#9d9d9d"><path d="M2 1 V6.5 H8 M2 6.5 C6 1 14 1.5 14 7 C14 10 11 12 7 15.5" strokeWidth="1.4" /></Icon>
          <Chevron color="#b0b0b0" />
        </PlainButton>
        <PlainButton $w={32} aria-label="Повторить">
          <Icon color="#9d9d9d"><path d="M3.5 3 C-1 8 2 15 8 15 C15 15 17 7 12 3 M12 8 V2.5 H16" strokeWidth="1.4" /></Icon>
        </PlainButton>
        <PlainButton $w={28} aria-label="Настройка панели">
          <Icon w={8} h={8}><path d="M1 1.5 H7 M1.5 4 L4 6.5 L6.5 4" strokeWidth="1.3" /></Icon>
        </PlainButton>
        <DocTitle>Втулка_комплект  -  режим совместимости • Сохранено<Chevron w={12} /></DocTitle>
      </TitleSide>
      <SearchBox>
        <SearchIcon />
        <input placeholder="Поиск" aria-label="Поиск" />
      </SearchBox>
      <TitleSide $end>
        <SignIn>Вход</SignIn>
        <PlainButton $w={48} aria-label="Свернуть"><Icon w={10} h={10}><path d="M0 5.5 H10" /></Icon></PlainButton>
        <PlainButton $w={48} aria-label="Развернуть">
          <Icon w={10} h={10}><path d="M.5 2.5 H7.5 V9.5 H.5 Z M2.5 .5 H8 Q9.5 .5 9.5 2 V7.5" /></Icon>
        </PlainButton>
        <PlainButton $w={48} aria-label="Закрыть"><Icon w={10} h={10}><path d="M0 0 L10 10 M10 0 L0 10" /></Icon></PlainButton>
      </TitleSide>
    </TitleBar>
    <TabBar>
      {TABS.map((t) => <Tab key={t} href="#" $active={t === "Главная"}>{t}</Tab>)}
      <Share>
        <Icon w={13} h={13} color="#fff"><path d="M5 3 H1 V12 H11 V9 M8 1 L12 4.5 L8 8 V6 Q5 6 3.5 9 Q4 3.5 8 3 Z" /></Icon>
        Общий доступ
        <Chevron color="#fff" />
      </Share>
    </TabBar>
  </>
)

const ClipboardGroup = () => (
  <Group $w={215} $pad="4px 4px 0 12px">
    <ClipboardBody>
      <BigButton $w={52}>
        <Icon w={30} h={34}>
          <path d="M7 5 H2 V30 H14 M20 5 H24 V12" stroke="#e0902c" strokeWidth="2" />
          <path d="M8 7 V4 H11 Q13 0 15 4 H18 V7 Z" fill="#fff" />
          <path d="M15 13 H28 V32 H15 Z" fill="#fff" strokeWidth="1.4" />
        </Icon>
        Вставить
        <Chevron />
      </BigButton>
      <SmallList>
        <SmallButton $off>
          <Icon color="#a8a8a8"><path d="M4 1 L11 11 M12 1 L5 11" /><circle cx="4.5" cy="13" r="2" /><circle cx="11.5" cy="13" r="2" /></Icon>
          Вырезать
        </SmallButton>
        <SmallButton $off>
          <Icon color="#a8a8a8"><path d="M5 12 H1 V1 H7 M5 4 H11 L15 8 V15 H5 Z M11 4 V8 H15 M7 10 H13 M7 12 H13" /></Icon>
          Копировать
        </SmallButton>
        <SmallButton>
          <Icon><path d="M10 6 L14 1 L16 3 L11 7.5" /><path d="M7 3 L13 9 L10 11 L5 5 Z" fill="#fff" /><path d="M5 6 L1 8 L7 15 L10 11 Z" stroke="#e07b1c" fill="#f6c58c" strokeWidth="1.3" /></Icon>
          Формат по образцу
        </SmallButton>
      </SmallList>
    </ClipboardBody>
    <GroupLabel><span>Буфер обмена</span><Launcher /></GroupLabel>
  </Group>
)

const FontGroup = () => (
  <Group $w={311} $pad="12px 3px 0 8px">
    <ToolRow>
      <Combo $w={113}><select aria-label="Шрифт"><option>Times New Roman</option></select><Chevron /></Combo>
      <Combo $w={54}><select aria-label="Размер шрифта"><option>12</option></select><Chevron /></Combo>
      <Tool $w={26} $gap={0} aria-label="Увеличить шрифт"><Glyph $size={16}>A</Glyph><Raised><Chevron color="#2b7cd3" up w={6} /></Raised></Tool>
      <Tool $w={27} $gap={0} aria-label="Уменьшить шрифт"><Glyph>A</Glyph><Raised><Chevron color="#2b7cd3" w={6} /></Raised></Tool>
      <ToolSep />
      <Split w={44} gap={4} label="Регистр"><Glyph>Aa</Glyph></Split>
      <ToolSep />
      <Tool $w={28} aria-label="Очистить формат">
        <Icon><path d="M1 13 L6 1 L11 13 M3 9 H8" /><path d="M8 11 L12 6 L16 9.5 L12 15 Z" fill="#fff" stroke="#a33fa8" strokeWidth="1.3" /></Icon>
      </Tool>
    </ToolRow>
    <ToolRow>
      <Tool $w={24} $on><Glyph $bold>Ж</Glyph></Tool>
      <Tool $w={27}><Glyph $italic>К</Glyph></Tool>
      <Split w={41} gap={7} label="Подчеркнутый"><Glyph $line="underline">Ч</Glyph></Split>
      <Tool $w={27}><Glyph $size={12} $line="line-through">ab</Glyph></Tool>
      <Tool $w={26}><Glyph $size={13} $bold>x<sub>2</sub></Glyph></Tool>
      <Tool $w={26}><Glyph $size={13} $bold>x<sup>2</sup></Glyph></Tool>
      <ToolSep />
      <Split w={40} gap={6} off label="Эффекты"><Icon color="#a8a8a8"><path d="M1 15 L6.5 1 H9.5 L15 15 H12 L11 11.5 H5 L4 15 Z M6 9 H10 L8 4 Z" /></Icon></Split>
      <Split w={42} label="Цвет выделения">
        <Icon h={20}><path d="M13 1 L6 8 L5 11 L2 13 H8 L9 10 L15 3 Z" /><path d="M0 17.5 H16" stroke="#ffff00" strokeWidth="5" /></Icon>
      </Split>
      <Split w={41} gap={6} label="Цвет текста"><Swatched $color="#f00">A</Swatched></Split>
    </ToolRow>
    <GroupLabel><span>Шрифт</span><Launcher /></GroupLabel>
  </Group>
)

const ParagraphGroup = () => (
  <Group $w={250} $pad="12px 3px 0 6px">
    <ToolRow>
      <Split w={40} label="Маркеры"><Icon><path d="M6 2.5 H16 M6 8 H16 M6 13.5 H16" /><path d="M0 2.5 H3 M0 8 H3 M0 13.5 H3" stroke="#2b7cd3" strokeWidth="3" /></Icon></Split>
      <Split w={41} label="Нумерация"><Icon><path d="M6 2.5 H16 M6 8 H16 M6 13.5 H16" /><path d="M2 0 V4 M1 6 H3 L1 9.5 H3 M1 12 H3 V15.5 H1" stroke="#2b7cd3" /></Icon></Split>
      <Split w={41} label="Многоуровневый список"><Icon><path d="M4 2.5 H16 M8 8 H16 M11 13.5 H16" /><path d="M1.5 0 V4 M4 6.5 H6 V10 H4 V8 H6 M8.5 12 V16" stroke="#2b7cd3" /></Icon></Split>
      <ToolSep $gap={4} />
      <Tool $w={27} aria-label="Уменьшить отступ"><Icon><path d="M1 2.5 H15 M9 6.5 H15 M9 9.5 H15 M1 13.5 H15" /><path d="M7 8 H1 M3.5 5.5 L1 8 L3.5 10.5" stroke="#2b7cd3" strokeWidth="1.3" /></Icon></Tool>
      <Tool $w={26} aria-label="Увеличить отступ"><Icon><path d="M1 2.5 H15 M10 6.5 H15 M10 9.5 H15 M1 13.5 H15" /><path d="M1 8 H8 M5.5 5.5 L8 8 L5.5 10.5" stroke="#2b7cd3" strokeWidth="1.3" /></Icon></Tool>
      <ToolSep />
      <Tool $w={28} aria-label="Сортировка">
        <Icon w={17} h={22}>
          <g stroke="none" fontSize="8" fontWeight="700"><text x="0" y="9" fill="#2b7cd3">А</text><text x="0" y="20" fill="#555">Я</text></g>
          <path d="M13 3 V18 M10 15 L13 18 L16 15" />
        </Icon>
      </Tool>
      <ToolSep />
      <Tool $w={26}><Glyph $size={16}>¶</Glyph></Tool>
    </ToolRow>
    <ToolRow>
      <Tool $w={27} aria-label="По левому краю"><Icon>{lines([[1, 15], [1, 10], [1, 15], [1, 10]])}</Icon></Tool>
      <Tool $w={26} aria-label="По центру"><Icon>{lines([[1, 15], [3, 13], [1, 15], [3, 13]])}</Icon></Tool>
      <Tool $w={24} $on aria-label="По правому краю"><Icon>{lines([[1, 15], [6, 15], [1, 15], [6, 15]])}</Icon></Tool>
      <Tool $w={28} aria-label="По ширине"><Icon>{lines([[1, 15], [1, 15], [1, 15], [1, 15]])}</Icon></Tool>
      <ToolSep />
      <Split w={44} gap={4} label="Интервал"><Icon><path d="M7 2.5 H16 M7 6.5 H16 M7 10.5 H16 M7 14.5 H16" /><path d="M2.5 1 V7 M.5 3 L2.5 1 L4.5 3 M2.5 9 V16 M.5 14 L2.5 16 L4.5 14" stroke="#2b7cd3" strokeWidth="1.3" /></Icon></Split>
      <ToolSep />
      <Split w={40} label="Заливка"><Icon h={18}><path d="M7 1 L13 8 L8 13 L3 8 Z M7 1 V6" /><path d="M13 5 Q15 6 14.5 11" stroke="#2b7cd3" strokeWidth="2" /><path d="M.5 14.5 H15.5 V17.5 H.5 Z" stroke="#999" /></Icon></Split>
      <Split w={42} label="Границы"><Icon><path d="M1.5 1 V14 M14.5 1 V14 M8 1 V14 M1 1.5 H15 M1 7.5 H15" strokeDasharray="1 1" /><path d="M1 15 H15" strokeWidth="2" stroke="#000" /></Icon></Split>
    </ToolRow>
    <GroupLabel><span>Абзац</span><Launcher /></GroupLabel>
  </Group>
)

const RibbonBar = () => (
  <Ribbon>
    <ClipboardGroup />
    <GroupSep />
    <FontGroup />
    <GroupSep />
    <ParagraphGroup />
    <GroupSep />
    <Group $grow $w={793} $pad="12px 3px 0 9px">
      <Gallery>
        <GalleryItems>
          {STYLES.map(([name, font, center], i) => (
            <StyleItem key={i} $font={font} $center={center}>{name}</StyleItem>
          ))}
        </GalleryItems>
        <GalleryNav>
          <NavButton $off aria-label="Вверх"><Chevron up color="#b0b0b0" /></NavButton>
          <NavButton aria-label="Вниз"><Chevron /></NavButton>
          <NavButton aria-label="Все стили"><Icon w={8} h={8}><path d="M1 1.5 H7 M1.5 4 L4 6.5 L6.5 4" strokeWidth="1.3" /></Icon></NavButton>
        </GalleryNav>
      </Gallery>
      <GroupLabel><span>Стили</span><Launcher /></GroupLabel>
    </Group>
    <GroupSep />
    <Group $w={112} $pad="4px 8px 0 12px">
      <SmallList>
        <SmallButton $gap={4}><SearchIcon />Найти<Tool $w={24} as="span"><Chevron /></Tool></SmallButton>
        <SmallButton $gap={4}>
          <Icon><g stroke="none" fontSize="10"><text x="6" y="8" fill="#a33fa8">b</text><text x="10" y="16" fill="#2b7cd3">c</text></g><path d="M3 4 Q-1 10 7 13 M4 10 L7 13 L4 16" stroke="#2b7cd3" strokeWidth="1.3" /></Icon>
          Заменить
        </SmallButton>
        <SmallButton $gap={4}><Icon><path d="M3 1 V14 L6.5 10.5 L9 15.5 L11 14.5 L8.5 9.5 H13 Z" /></Icon>Выделить<Chevron /></SmallButton>
      </SmallList>
      <GroupLabel><span>Редактирование</span></GroupLabel>
    </Group>
    <GroupSep />
    <Group $w={86} $pad="6px 4px 0">
      <BigButton $off $size={12} $gap={6}>
        <Icon w={28} h={28} color="#a8a8a8"><path d="M.5 .5 H27.5 V27.5 H.5 Z M4 4 H12.5 V12.5 H4 Z M15.5 4 H24 V12.5 H15.5 Z M4 15.5 H12.5 V24 H4 Z M15.5 15.5 H24 V24 H15.5 Z" strokeWidth="1.2" /></Icon>
        Надстройки
      </BigButton>
      <GroupLabel><span>Надстройки</span></GroupLabel>
    </Group>
    <GroupSep />
    <Collapse aria-label="Свернуть ленту"><Chevron w={14} /></Collapse>
  </Ribbon>
)

export default function WordWindow() {
  return (
    <App>
      <GlobalStyle />
      <Header />
      <RibbonBar />
      <RulerBar>
        <RulerCorner><Icon w={6} h={7}><path d="M1 0 V6 H6" strokeWidth="2" /></Icon></RulerCorner>
        <HRuler>
          <Icon w={12} h={22} color="#777"><path d="M.5 .5 H11.5 V4 L6 9 L.5 4 Z M.5 15.5 V14 L6 9 L11.5 14 V15.5 M.5 15.5 H11.5 V21.5 H.5 Z" fill="#fff" /></Icon>
          <ol>{Array.from({ length: 13 }, (_, i) => <li key={i}>{i * 2 + 2}</li>)}</ol>
          <Icon w={12} h={8} color="#777"><path d="M.5 7.5 V4 L6 .5 L11.5 4 V7.5 Z" fill="#fff" /></Icon>
        </HRuler>
      </RulerBar>
      <Work>
        <VRuler>
          <ol>{[4, 6, 8, 10, 12, 14, 16, 18].map((n) => <li key={n}>{n}</li>)}</ol>
        </VRuler>
        <Canvas>
          <Pages>
            <TitleSheet />
            <CuttingSheet />
            <SketchSheet page="2" oper="3" heights={SHORT} name="Шестерня ведомая"><BlankSketch /></SketchSheet>
            <RouteSheet page="3" rows={turning5} footer={{ frame: 276, h: 12 }} />
            <SketchSheet page="4" oper="005"><StepSketch /></SketchSheet>
            <RouteSheet page="5" rows={turning10} footer={{ frame: 276, h: 12 }}>
              <MoveHandle aria-label="Переместить таблицу">
                <Icon w={13} h={13}><path d="M6.5 1 V12 M1 6.5 H12 M5 2.5 L6.5 1 L8 2.5 M5 10.5 L6.5 12 L8 10.5 M2.5 5 L1 6.5 L2.5 8 M10.5 5 L12 6.5 L10.5 8" /></Icon>
              </MoveHandle>
              <SizeHandle />
            </RouteSheet>
            <SketchSheet page="6" oper="010"><SleeveSketch /></SketchSheet>
            <RouteSheet page="7" tall rows={broachRows} shop={"Ц\nех"} footer={{ frame: 278, h: 11 }} />
            <SketchSheet page="8" oper="015" heights={SHORT}><BroachSketch /></SketchSheet>
            <RouteSheet page="9" tall rows={millRows} shop={"Ц\nех"} footer={{ frame: 278, h: 11 }} />
            <SketchSheet page="10" oper="020" heights={SHORT}><MillSketch /></SketchSheet>
          </Pages>
        </Canvas>
        <ScrollBar>
          <Icon w={10} h={8}><path d="M0 8 L5 0 L10 8 Z" fill="#6e6e6e" stroke="none" /></Icon>
          <ScrollTrack />
          <Icon w={10} h={8}><path d="M0 0 L5 8 L10 0 Z" fill="#6e6e6e" stroke="none" /></Icon>
        </ScrollBar>
      </Work>
      <StatusBar>
        приблизительное число знаков Втулка_комплект: 8 634.
        <FocusButton $gap={2}>
          <Icon><path d="M4 1 H1 V4 M12 1 H15 V4 M1 12 V15 H4 M15 12 V15 H12 M5 3 H9 L11.5 6 V13 H5 Z M9 3 V6 H11.5" /></Icon>
          Фокусировка
        </FocusButton>
        <ViewButton aria-label="Режим чтения"><Icon w={14} h={14}><path d="M7 2 V13 M7 2 H1 V12 H6 L7 13 L8 12 H13 V2 H7 M3 4.5 H5 M3 6.5 H5 M3 8.5 H5 M9 4.5 H11 M9 6.5 H11 M9 8.5 H11" /></Icon></ViewButton>
        <ViewButton $on aria-label="Разметка страницы"><Icon w={12} h={14}><path d="M1 .5 H11 V13.5 H1 Z M3 3.5 H9 M3 5.5 H9 M3 7.5 H9 M3 9.5 H9 M3 11.5 H9" /></Icon></ViewButton>
        <ViewButton aria-label="Веб-документ"><Icon w={15} h={14}><path d="M6 12.5 H1 V.5 H12 V6 M3 3.5 H10 M3 5.5 H8 M3 7.5 H6 M3 9.5 H5" /><circle cx="10.5" cy="9.5" r="4" /><path d="M6.5 9.5 H14.5 M10.5 5.5 V13.5" /></Icon></ViewButton>
        <PlainButton $w={18} aria-label="Уменьшить"><Icon w={10} h={10}><path d="M1 5.5 H9" /></Icon></PlainButton>
        <Zoom type="range" min="10" max="190" defaultValue="40" aria-label="Масштаб" />
        <PlainButton $w={20} aria-label="Увеличить"><Icon w={10} h={10}><path d="M1 5.5 H9 M5 1.5 V9.5" /></Icon></PlainButton>
        <Percent>40 %</Percent>
      </StatusBar>
      <TaskBar>
        <Task /><Task /><Task $bare /><Task /><Task /><Task /><Task $on />
        <Clock>8:46</Clock>
      </TaskBar>
    </App>
  )
}
